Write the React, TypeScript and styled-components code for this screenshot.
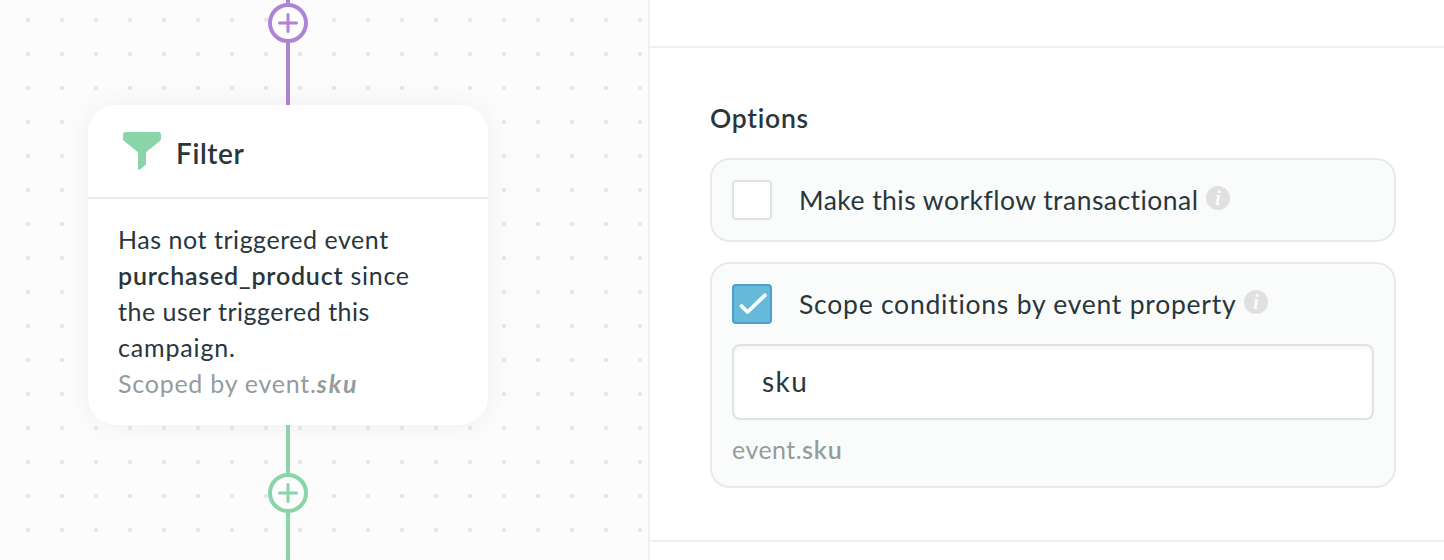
import React from "react";
import styled, { createGlobalStyle } from "styled-components";

const PURPLE = "#b084d4";
const GREEN = "#89d4a8";

const GlobalStyle = createGlobalStyle`
  *, *::before, *::after { box-sizing: border-box; }
  body {
    margin: 0;
    background: #fff;
    color: #29363b;
    font-family: Lato, "Liberation Sans", sans-serif;
    -webkit-font-smoothing: antialiased;
  }
`;

const Page = styled.div`
  display: grid;
  grid-template-columns: 650px 1fr;
  width: 1444px;
  height: 560px;
  overflow: hidden;
`;

const Canvas = styled.section`
  padding-left: 88px;
  height: 560px;
  overflow: hidden;
  border-right: 2px solid #f0f0f1;
  background-color: #fcfcfc;
  background-image: linear-gradient(90deg, #fcfcfc 30px, transparent 30px),
    linear-gradient(#fcfcfc 30px, #e8e8ec 30px);
  background-size: 34px 34px;
  background-position: -4px -12px;
`;

const Flow = styled.div`
  display: flex;
  flex-direction: column;
  align-items: center;
  width: 400px;
`;

const Line = styled.div<{ $color: string; $length: number }>`
  flex: none;
  width: 4px;
  height: ${(p) => p.$length}px;
  background: ${(p) => p.$color};
`;

const AddButton = styled.button<{ $color: string }>`
  flex: none;
  display: grid;
  place-items: center;
  width: 40px;
  height: 40px;
  padding: 0;
  border: 4px solid ${(p) => p.$color};
  border-radius: 50%;
  background: #fdfdfd;
  color: ${(p) => p.$color};

  svg { display: block; }
`;

const Card = styled.article`
  flex: none;
  width: 400px;
  height: 320px;
  border-radius: 28px;
  background: #fff;
  box-shadow: 0 0 30px rgba(35, 40, 80, 0.06);
`;

const CardHeader = styled.header`
  display: flex;
  align-items: center;
  gap: 14px;
  height: 94px;
  padding: 0 34px;
  border-bottom: 2px solid #e8e8ed;
`;

const CardTitle = styled.h2`
  margin: 3px 0 0;
  font-size: 28px;
  line-height: 34px;
  font-weight: 600;
  letter-spacing: 0.6px;
`;

const CardBody = styled.div`
  padding: 22px 30px 0;
  font-size: 25px;
  line-height: 36px;
`;

const TextLine = styled.div<{ $spacing?: number; $muted?: boolean }>`
  white-space: nowrap;
  letter-spacing: ${(p) => p.$spacing ?? 0.54}px;
  color: ${(p) => (p.$muted ? "#949c9e" : "inherit")};
`;

const Strong = styled.strong<{ $spacing: number }>`
  font-weight: 600;
  letter-spacing: ${(p) => p.$spacing}px;
`;

const StrongItalic = styled.em`
  font-weight: 700;
  letter-spacing: 1.9px;
`;

const Panel = styled.aside`
  display: flex;
  flex-direction: column;
`;

const PreviousSection = styled.div`
  height: 48px;
  border-bottom: 2px solid #f0f0f0;
`;

const Section = styled.section`
  height: 494px;
  padding: 52px 48px 0 60px;
  border-bottom: 2px solid #f0f0f0;
`;

const SectionTitle = styled.h3`
  margin: 0 0 22px;
  font-size: 26.5px;
  line-height: 36px;
  font-weight: 600;
  letter-spacing: 0.75px;
`;

const OptionBox = styled.div`
  padding: 20px;
  border: 2px solid #e8e9ee;
  border-radius: 20px;
  background: #fafcfb;

  & + & {
    height: 226px;
    margin-top: 20px;
  }
`;

const OptionRow = styled.label`
  display: flex;
  align-items: center;
  height: 40px;
`;

const Checkbox = styled.span<{ $checked?: boolean }>`
  display: grid;
  place-items: center;
  width: 40px;
  height: 40px;
  margin-right: 27px;
  border: 2px solid ${(p) => (p.$checked ? "#48a2cb" : "#e1e3e3")};
  border-radius: 4px;
  background: ${(p) => (p.$checked ? "#67b9d9" : "#fff")};
`;

const OptionLabel = styled.span<{ $spacing: number; $width: number }>`
  width: ${(p) => p.$width}px;
  white-space: nowrap;
  font-size: 26.5px;
  line-height: 36px;
  letter-spacing: ${(p) => p.$spacing}px;
`;

const Info = styled.span`
  width: 24px;
  height: 24px;
  margin-bottom: 4px;
  border-radius: 50%;
  background: #e0e0e0;
  color: #fafcfb;
  font: italic 700 21px/25px "Liberation Serif", serif;
  text-align: center;
`;

const Field = styled.input`
  display: block;
  width: 642px;
  height: 76px;
  margin: 20px 0 11px;
  padding: 0 28px 2px;
  border: 2px solid #e1e3e3;
  border-radius: 8px;
  outline: none;
  background: #fff;
  box-shadow: inset 0 2px 4px rgba(0, 0, 0, 0.05);
  color: inherit;
  font: 400 28px Lato, "Liberation Sans", sans-serif;
  letter-spacing: 1.5px;
`;

const Hint = styled.div`
  font-size: 25px;
  line-height: 36px;
  letter-spacing: 0.45px;
  color: #949c9e;
`;

function Add({ color }: { color: string }) {
  return (
    <AddButton $color={color} aria-label="Add step">
      <svg width="20" height="20" viewBox="0 0 20 20" fill="none" stroke="currentColor" strokeWidth="3" strokeLinecap="round">
        <path d="M10 1.5v17M1.500 10h17" />
      </svg>
    </AddButton>
  );
}

function FunnelIcon() {
  return (
    <svg width="40" height="40" viewBox="0 0 40 40" fill={GREEN}>
      <path d="M3.5 1h33A2.5 2.5 0 0 1 39 3.500V8Q39 9 38.200 9.700L24 21.200V32.600Q24 33.500 23.300 34.100L18 38.600Q16.200 39.600 16 37.800V21.200L1.800 9.700Q1 9 1 8V3.500A2.500 2.500 0 0 1 3.500 1Z" />
    </svg>
  );
}

function CheckMark() {
  return (
    <svg width="36" height="36" viewBox="0 0 36 36" fill="none" stroke="#fff" strokeWidth="3.8" strokeLinecap="round" strokeLinejoin="round">
      <path d="M7.600 20.100L13.500 26L30.800 9.300" />
    </svg>
  );
}

export default function App() {
  return (
    <>
      <GlobalStyle />
      <Page>
        <Canvas>
          <Flow>
            <Line $color={PURPLE} $length={3} />
            <Add color={PURPLE} />
            <Line $color={PURPLE} $length={62} />
            <Card>
              <CardHeader>
                <FunnelIcon />
                <CardTitle>Filter</CardTitle>
              </CardHeader>
              <CardBody>
                <TextLine>Has not triggered event</TextLine>
                <TextLine $spacing={0.7}>
                  <Strong $spacing={0.8}>purchased_product</Strong> since
                </TextLine>
                <TextLine $spacing={0.5}>the user triggered this</TextLine>
                <TextLine $spacing={0.85}>campaign.</TextLine>
                <TextLine $spacing={0.75} $muted>
                  Scoped by event.<StrongItalic>sku</StrongItalic>
                </TextLine>
              </CardBody>
            </Card>
            <Line $color={GREEN} $length={48} />
            <Add color={GREEN} />
            <Line $color={GREEN} $length={62} />
            <Card />
          </Flow>
        </Canvas>
        <Panel>
          <PreviousSection />
          <Section>
            <SectionTitle>Options</SectionTitle>
            <OptionBox>
              <OptionRow>
                <Checkbox />
                <OptionLabel $spacing={0.46} $width={407}>Make this workflow transactional</OptionLabel>
                <Info>i</Info>
              </OptionRow>
            </OptionBox>
            <OptionBox>
              <OptionRow>
                <Checkbox $checked>
                  <CheckMark />
                </Checkbox>
                <OptionLabel $spacing={0.76} $width={445}>Scope conditions by event property</OptionLabel>
                <Info>i</Info>
              </OptionRow>
              <Field defaultValue="sku" />
              <Hint>
                event.<Strong $spacing={0.9}>sku</Strong>
              </Hint>
            </OptionBox>
          </Section>
        </Panel>
      </Page>
    </>
  );
}
